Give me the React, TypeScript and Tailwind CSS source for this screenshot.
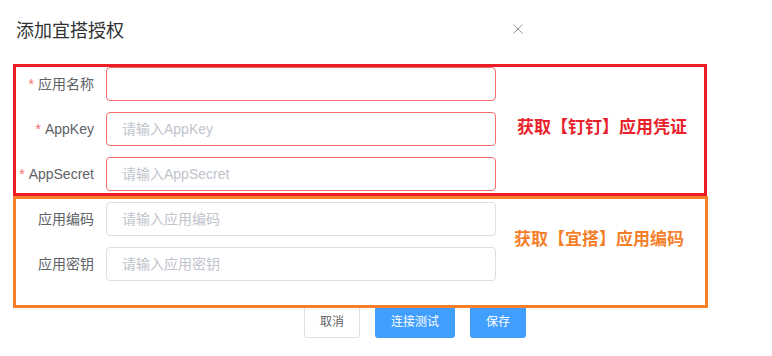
const font = '[font-family:"Liberation_Sans","Noto_Sans_CJK_SC",sans-serif]';

interface Field {
  label: string;
  placeholder: string;
  required?: boolean;
}

const dingFields: Field[] = [
  { label: '应用名称', placeholder: '', required: true },
  { label: 'AppKey', placeholder: '请输入AppKey', required: true },
  { label: 'AppSecret', placeholder: '请输入AppSecret', required: true },
];

const yidaFields: Field[] = [
  { label: '应用编码', placeholder: '请输入应用编码' },
  { label: '应用密钥', placeholder: '请输入应用密钥' },
];

function FormRow({ field }: { field: Field }) {
  return (
    <div className="flex items-center h-[34px]">
      <label className="w-[90px] pr-[12px] text-right text-[14px] text-[#606266] whitespace-nowrap">
        {field.required && <span className="text-[#f56c6c] mr-[4px]">*</span>}
        {field.label}
      </label>
      <input
        placeholder={field.placeholder}
        className={
          'w-[390px] h-[34px] rounded-[4px] border px-[15px] text-[14px] text-[#606266] outline-none placeholder:text-[#c0c4cc] ' +
          (field.required ? 'border-[#f56c6c]' : 'border-[#dcdfe6]')
        }
      />
    </div>
  );
}

export default function App() {
  return (
    <div className={`w-[772px] h-[356px] bg-white overflow-hidden ${font}`}>
      <div className="w-[534px] h-[64px] flex justify-between items-start pl-[16px] pr-[11px] pt-[19px]">
        <span className="text-[18px] leading-[24px] text-[#303133]">添加宜搭授权</span>
        <svg width="10" height="10" viewBox="0 0 10 10" className="mt-[5px]">
          <path d="M0.5 0.5L9.5 9.5M9.5 0.5L0.5 9.5" stroke="#909399" strokeWidth="1" />
        </svg>
      </div>

      <div className="ml-[13px] w-[694px] border-[3px] border-[#ee1c25] flex items-center">
        <div className="flex flex-col gap-[11px] pb-[2px]">
          {dingFields.map((f) => (
            <FormRow key={f.label} field={f} />
          ))}
        </div>
        <span className="ml-[21px] mb-[4px] text-[17px] font-bold text-[#e8202a] whitespace-nowrap">
          获取【钉钉】应用凭证
        </span>
      </div>

      <div className="relative z-10 ml-[13px] w-[695px] border-[3px] border-[#f57f2a] pt-[3px] pb-[24px] flex items-center">
        <div className="flex flex-col gap-[11px]">
          {yidaFields.map((f) => (
            <FormRow key={f.label} field={f} />
          ))}
        </div>
        <span className="ml-[18px] mb-[4px] text-[17px] font-bold text-[#f57f2a] whitespace-nowrap">
          获取【宜搭】应用编码
        </span>
      </div>

      <div className="flex gap-[15px] pl-[304px] mt-[-2px]">
        <button className="h-[32px] w-[56px] rounded-[3px] border border-[#dcdfe6] bg-white text-[12px] text-[#606266]">
          取消
        </button>
        <button className="h-[32px] w-[80px] rounded-[3px] bg-[#409eff] text-[12px] text-white">
          连接测试
        </button>
        <button className="h-[32px] w-[56px] rounded-[3px] bg-[#409eff] text-[12px] text-white">
          保存
        </button>
      </div>
    </div>
  );
}
